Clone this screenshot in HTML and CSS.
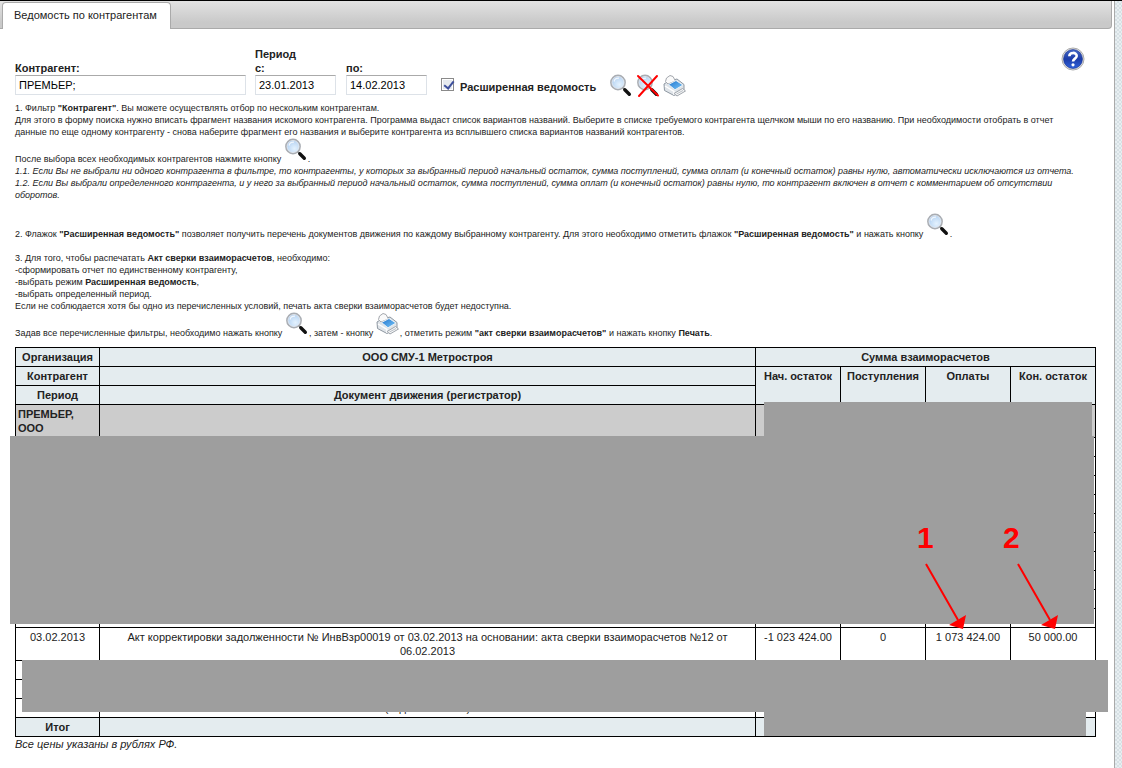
FILE: index.html
```html
<!DOCTYPE html>
<html lang="ru">
<head>
<meta charset="utf-8">
<title>Ведомость по контрагентам</title>
<link rel="stylesheet" href="styles.css">
</head>
<body>
<svg class="defs" aria-hidden="true">
  <defs>
    <radialGradient id="lens" cx="0.6" cy="0.65" r="0.7">
      <stop offset="0" stop-color="#e4f2fe"/><stop offset="0.6" stop-color="#c3dcf6"/><stop offset="1" stop-color="#9dc0e8"/>
    </radialGradient>
    <linearGradient id="ball" x1="0" y1="0" x2="0" y2="1">
      <stop offset="0" stop-color="#4468c8"/><stop offset="0.5" stop-color="#1c3ca8"/><stop offset="1" stop-color="#2f62dc"/>
    </linearGradient>
    <linearGradient id="glass" x1="0" y1="0" x2="1" y2="1">
      <stop offset="0" stop-color="#1f74cc"/><stop offset="1" stop-color="#7cc8fa"/>
    </linearGradient>
    <symbol id="search" viewBox="0 0 24 24">
      <path d="M13.5 13.5 17 16.500" stroke="#8a8a8a" stroke-width="2"/>
      <path d="M15.800 15.800 20.300 20.300" stroke="#111" stroke-width="3.400" stroke-linecap="round"/>
      <circle cx="9" cy="8.500" r="7" fill="url(#lens)" stroke="#a9adb3" stroke-width="1.800"/>
      <circle cx="9" cy="8.500" r="6" fill="none" stroke="#e9eef4" stroke-width="0.800"/>
      <path d="M5 7.500C5.500 5 7.500 4 10 4.200" stroke="#fff" stroke-width="1.300" fill="none" opacity=".8"/>
    </symbol>
    <symbol id="reset" viewBox="0 0 24 24">
      <use href="#search" width="24" height="24"/>
      <path d="M2 2 22 21.500M21 2 3 22" stroke="#f00" stroke-width="2" stroke-linecap="round"/>
    </symbol>
    <symbol id="printer" viewBox="0 0 24 24">
      <path d="M1 10 5 7.500 14 5 21 10.500 21 16 11 21.500 1.500 16.500Z" fill="#dfe4e9" stroke="#8f98a2"/>
      <path d="M2.500 7.500 3.500 4 7 1.500 10 2.500 12.500 7 5 10Z" fill="#fafafa" stroke="#a4a8ae"/>
      <path d="M5.500 10.500 13 6.500 20 11 12 15.800Z" fill="url(#glass)" stroke="#e8f0f6"/>
      <path d="M2 12 11 17.500 11 21" fill="none" stroke="#fff" stroke-width="1.400"/>
      <path d="M11 19.500 19.500 14.500 22.500 17 14 22Z" fill="#f5f6f7" stroke="#9fa5ac"/>
      <path d="M13.500 20 20 16.500" stroke="#b9bec4"/>
    </symbol>
  </defs>
</svg>
<div class="page">
  <main class="panel">
    <nav class="tabs"><a class="tab" href="#report">Ведомость по контрагентам</a></nav>
    <div class="content" id="report">
      <form class="filter">
        <div class="field wide">
          <label for="agent">Контрагент:</label>
          <input id="agent" type="text" value="ПРЕМЬЕР;">
        </div>
        <fieldset class="period">
          <legend>Период</legend>
          <div class="field"><label for="from">с:</label><input id="from" type="text" value="23.01.2013"></div>
          <div class="field"><label for="to">по:</label><input id="to" type="text" value="14.02.2013"></div>
        </fieldset>
        <div class="extended">
          <input id="ext" type="checkbox" checked>
          <label for="ext">Расширенная ведомость</label>
        </div>
        <div class="actions">
          <button type="button" aria-label="Найти"><svg class="icon"><use href="#search"/></svg></button>
          <button type="button" aria-label="Сбросить"><svg class="icon"><use href="#reset"/></svg></button>
          <button type="button" aria-label="Печать"><svg class="icon"><use href="#printer"/></svg></button>
        </div>
        <button class="help" type="button" aria-label="Справка">
          <svg viewBox="0 0 24 24">
            <circle cx="12" cy="12" r="11" fill="#e4e4e4" stroke="#aaa"/>
            <circle cx="12" cy="12" r="9.500" fill="url(#ball)" stroke="#17308c" stroke-width=".6"/>
            <path d="M8.300 9.300C8.500 4.800 15.800 4.900 15.700 9 15.600 11.600 12 11.700 12 14.600" fill="none" stroke="#fff" stroke-width="2.600"/>
            <circle cx="12" cy="17.800" r="1.600" fill="#fff"/>
          </svg>
        </button>
      </form>
      <div class="notes">
        <p>1. Фильтр <b>"Контрагент"</b>. Вы можете осуществлять отбор по нескольким контрагентам.<br>
        Для этого в форму поиска нужно вписать фрагмент названия искомого контрагента. Программа выдаст список вариантов названий. Выберите в списке требуемого контрагента щелчком мыши по его названию. При необходимости отобрать в отчет<br>
        данные по еще одному контрагенту - снова наберите фрагмент его названия и выберите контрагента из всплывшего списка вариантов названий контрагентов.</p>
        <p>После выбора всех необходимых контрагентов нажмите кнопку <svg class="icon"><use href="#search"/></svg>.<br>
        <i>1.1. Если Вы не выбрали ни одного контрагента в фильтре, то контрагенты, у которых за выбранный период начальный остаток, сумма поступлений, сумма оплат (и конечный остаток) равны нулю, автоматически исключаются из отчета.<br>
        1.2. Если Вы выбрали определенного контрагента, и у него за выбранный период начальный остаток, сумма поступлений, сумма оплат (и конечный остаток) равны нулю, то контрагент включен в отчет с комментарием об отсутствии оборотов.</i></p>
        <p class="spaced">2. Флажок <b>"Расширенная ведомость"</b> позволяет получить перечень документов движения по каждому выбранному контрагенту. Для этого необходимо отметить флажок <b>"Расширенная ведомость"</b> и нажать кнопку <svg class="icon"><use href="#search"/></svg>.</p>
        <p class="spaced">3. Для того, чтобы распечатать <b>Акт сверки взаиморасчетов</b>, необходимо:<br>
        -сформировать отчет по единственному контрагенту,<br>
        -выбрать режим <b>Расширенная ведомость</b>,<br>
        -выбрать определенный период.<br>
        Если не соблюдается хотя бы одно из перечисленных условий, печать акта сверки взаиморасчетов будет недоступна.</p>
        <p>Задав все перечисленные фильтры, необходимо нажать кнопку <svg class="icon"><use href="#search"/></svg>, затем - кнопку <svg class="icon"><use href="#printer"/></svg>, отметить режим <b>"акт сверки взаиморасчетов"</b> и нажать кнопку <b>Печать</b>.</p>
      </div>
      <div class="report">
        <table>
          <colgroup><col class="c-date"><col><col class="c-sum"><col class="c-sum"><col class="c-sum"><col class="c-sum"></colgroup>
          <thead>
            <tr><th>Организация</th><th>ООО СМУ-1 Метростроя</th><th colspan="4">Сумма взаиморасчетов</th></tr>
            <tr><th>Контрагент</th><th></th><th rowspan="2">Нач. остаток</th><th rowspan="2">Поступления</th><th rowspan="2">Оплаты</th><th rowspan="2">Кон. остаток</th></tr>
            <tr><th>Период</th><th>Документ движения (регистратор)</th></tr>
          </thead>
          <tbody>
            <tr class="group"><th scope="row">ПРЕМЬЕР, ООО</th><td></td><td></td><td></td><td></td><td></td></tr>
            <tr><td></td><td></td><td></td><td></td><td></td><td></td></tr>
            <tr><td></td><td></td><td></td><td></td><td></td><td></td></tr>
            <tr><td></td><td></td><td></td><td></td><td></td><td></td></tr>
            <tr><td></td><td></td><td></td><td></td><td></td><td></td></tr>
            <tr><td></td><td></td><td></td><td></td><td></td><td></td></tr>
            <tr><td></td><td></td><td></td><td></td><td></td><td></td></tr>
            <tr><td></td><td></td><td></td><td></td><td></td><td></td></tr>
            <tr><td></td><td></td><td></td><td></td><td></td><td></td></tr>
            <tr><td></td><td></td><td></td><td></td><td></td><td></td></tr>
            <tr><td></td><td></td><td></td><td></td><td></td><td></td></tr>
            <tr><td>03.02.2013</td><td class="doc">Акт корректировки задолженности № ИнвВзр00019 от 03.02.2013 на основании: акта сверки взаиморасчетов №12 от 06.02.2013</td><td>-1 023 424.00</td><td>0</td><td>1 073 424.00</td><td>50 000.00</td></tr>
            <tr><td></td><td></td><td></td><td></td><td></td><td></td></tr>
            <tr><td></td><td></td><td></td><td></td><td></td><td></td></tr>
            <tr><td></td><td>(задолженности)</td><td></td><td></td><td></td><td></td></tr>
          </tbody>
          <tfoot><tr><th>Итог</th><th></th><th></th><th></th><th></th><th></th></tr></tfoot>
        </table>
        <div class="mask mask-sums"></div>
        <div class="mask mask-rows"></div>
        <div class="mask mask-tail"></div>
        <div class="mask mask-total"></div>
        <svg class="marks" viewBox="0 0 160 110">
          <text x="17" y="26">1</text><text x="103" y="26">2</text>
          <path class="shaft" d="M26 42 58 98M118 42 150 98"/>
          <path d="M66 93 49 103 63 107ZM158 93 141 103 155 107Z"/>
        </svg>
      </div>
      <p class="footnote">Все цены указаны в рублях РФ.</p>
    </div>
  </main>
  <div class="edge"></div>
</div>
</body>
</html>
```
FILE: styles.css
```css
* { box-sizing: border-box; }
body { margin: 0; background: #fff; color: #222; font: 11px/14px "Liberation Sans", Arial, sans-serif; }
.defs { position: absolute; width: 0; height: 0; }
.page { display: flex; min-height: 100vh; border-top: 1px solid #000; }
.panel { flex: 1; min-width: 0; padding-right: 2px; }
.edge { width: 8px; border-left: 1px solid #aaa; background: repeating-conic-gradient(#d6e0e4 0 25%, #e8eff2 0 50%) 0 0 / 4px 4px; }

.tabs { display: flex; height: 28px; padding: 1px 0 0 2px; border: solid #aaa; border-width: 0 1px 1px 0; border-radius: 0 0 4px 0; background: linear-gradient(#e2e2e2, #c9c9c9 80%); }
.tab { height: 27px; padding: 5px 13px 0 11px; border: 1px solid #aaa; border-bottom: 0; border-radius: 4px 4px 0 0; background: #fff; color: #222; text-decoration: none; }

.content { padding: 18px 16px 0 15px; }
.filter { display: flex; align-items: flex-end; height: 48px; }
.filter label, .filter legend { font-weight: bold; }
.field { display: flex; flex-direction: column; width: 81px; }
.wide { width: 231px; margin-right: 9px; }
.filter input[type="text"] { width: 100%; height: 20px; padding: 0 3px; border: 1px solid #dde2e8; border-top-color: #aaa; background: #fff; color: #000; font: inherit; }
.period { display: flex; gap: 10px; margin: 0; padding: 0; border: 0; min-width: 0; }
.period legend { padding: 0; }
.extended { display: flex; align-items: center; gap: 6px; height: 20px; margin: 0 13px 0 14px; }
.extended input { appearance: none; width: 13px; height: 13px; margin: 0 0 2px; border: 1px solid #8a8a8a; background: #e6eaee; box-shadow: inset 0 0 0 1px #fff; }
.extended input:checked::after { content: ""; display: block; width: 4px; height: 8px; margin: 0 0 0 4px; border: solid #3d4f9c; border-width: 0 2px 2px 0; transform: rotate(38deg); }
.extended label { padding-top: 4px; }
button { padding: 0; border: 0; background: none; cursor: pointer; }
.actions { display: flex; gap: 3px; margin-bottom: -3px; }
.actions button { height: 24px; }
.icon { width: 24px; height: 24px; }
.help { align-self: flex-start; width: 24px; height: 24px; margin: 0 11px 0 auto; }
.help svg { display: block; }

.notes { padding: 7px 0 8px; font-size: 9px; line-height: 12px; }
.notes p { margin: 0; }
.notes .spaced { margin-top: 12px; }

.report { position: relative; }
table { width: 100%; border-collapse: collapse; table-layout: fixed; }
.c-date { width: 84px; }
.c-sum { width: 85px; }
th, td { height: 19px; padding: 2px; border: 1px solid #000; text-align: center; vertical-align: top; }
thead th, tfoot th { background: #e4ecef; }
.group th, .group td { background: #ccc; }
.group th { padding-right: 16px; text-align: left; }
.group th, .group td, .doc { height: 33px; }
.doc { padding: 2px 16px; }

.mask { position: absolute; background: #9e9e9e; }
.mask-sums { top: 55px; right: 4px; width: 328px; height: 35px; }
.mask-rows { top: 89px; left: -5px; right: 2px; height: 188px; }
.mask-tail { top: 313px; left: 7px; right: -12px; height: 52px; }
.mask-total { top: 365px; right: 10px; width: 322px; height: 24px; }
.marks { position: absolute; top: 175px; right: 36px; width: 160px; height: 110px; fill: #f00; font-size: 30px; font-weight: bold; }
.shaft { stroke: #f00; stroke-width: 2; }
.footnote { margin: 0; font-style: italic; }
```
